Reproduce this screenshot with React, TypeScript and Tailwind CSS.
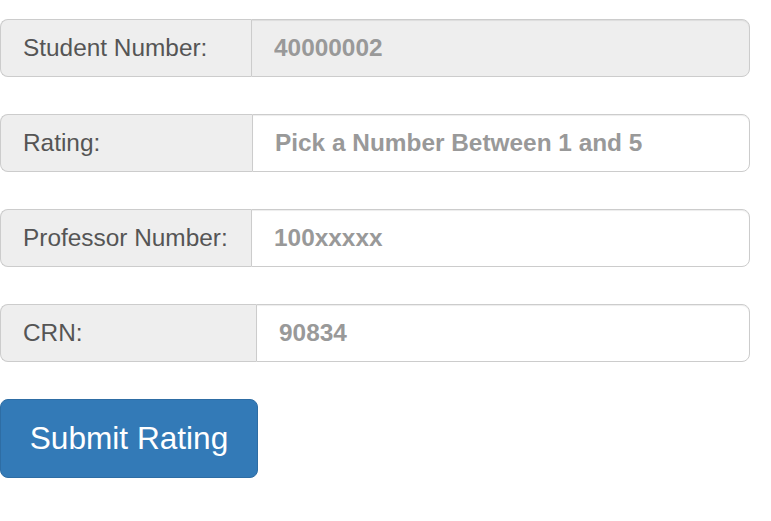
import React from 'react';

const rows = [
  { label: 'Student Number:', value: '40000002', addon: 'w-[251px]', disabled: true },
  { label: 'Rating:', value: 'Pick a Number Between 1 and 5', addon: 'w-[252px]', disabled: false },
  { label: 'Professor Number:', value: '100xxxxx', addon: 'w-[251px]', disabled: false },
  { label: 'CRN:', value: '90834', addon: 'w-[256px]', disabled: false },
];

export default function App() {
  return (
    <div className="bg-white min-h-screen pt-[19px] font-['Liberation_Sans',Arial,sans-serif]">
      <form className="w-[750px] flex flex-col gap-[37px]" onSubmit={(e) => e.preventDefault()}>
        {rows.map((row) => (
          <div key={row.label} className="flex h-[58px]">
            <span
              className={`${row.addon} shrink-0 flex items-center pl-[22px] text-[24.4px] text-[#555] bg-[#eee] border-[1.5px] border-r-0 border-[#ccc] rounded-l-[8px]`}
            >
              {row.label}
            </span>
            <input
              type="text"
              readOnly={row.disabled}
              placeholder={row.value}
              className={`flex-1 min-w-0 px-[22px] text-[24.4px] font-bold placeholder:text-[#999] text-[#999] border-[1.5px] border-[#ccc] rounded-r-[8px] shadow-[inset_0_1px_1px_rgba(0,0,0,0.075)] outline-none ${
                row.disabled ? 'bg-[#eee]' : 'bg-white'
              }`}
            />
          </div>
        ))}
        <div>
          <button
            type="submit"
            className="w-[258px] h-[79px] text-[31.6px] text-white bg-[#337ab7] border-[1.5px] border-[#2e6da4] rounded-[8px]"
          >
            Submit Rating
          </button>
        </div>
      </form>
    </div>
  );
}
